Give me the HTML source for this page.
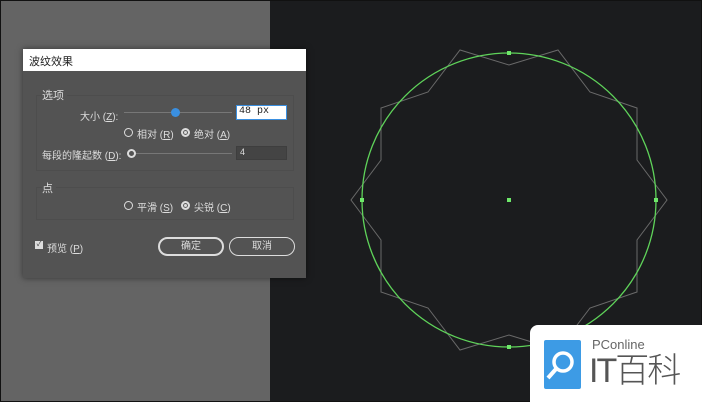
<!DOCTYPE html><html><head><meta charset="utf-8"><style>
*{margin:0;padding:0;box-sizing:border-box}
body{width:702px;height:402px;overflow:hidden;background:#1b1c1e;position:relative;font-family:"Liberation Sans","Noto Sans CJK SC",sans-serif;font-size:10px;color:#ddd}
.a{position:absolute}
.t{position:absolute;white-space:nowrap}
</style></head><body>
<div class="a" style="left:0;top:0;width:702px;height:402px;border:1px solid #111"></div>
<div class="a" style="left:1px;top:1px;width:269px;height:400px;background:#646464"></div>
<svg class="a" style="left:0;top:0" width="702" height="402">
<polygon fill="none" stroke="#6a6a6a" stroke-width="1" points="667,200 637,160 637,108 590,92 558,50 509,65 460,50 428,92 381,108 381,160 351,200 381,240 381,292 428,308 460,350 509,335 558,350 590,308 637,292 637,240"/>
<circle cx="509" cy="200" r="147" fill="none" stroke="#5fd35a" stroke-width="1.3"/>
<g fill="#6ee86a"><rect x="507" y="51" width="4" height="4"/><rect x="360" y="198" width="4" height="4"/><rect x="654" y="198" width="4" height="4"/><rect x="507" y="345" width="4" height="4"/><rect x="507" y="198" width="4" height="4"/></g>
</svg>
<div class="a" style="left:23px;top:49px;width:283px;height:229px;background:#535353;box-shadow:0 0 6px rgba(0,0,0,.5)"></div>
<div class="a" style="left:23px;top:49px;width:283px;height:22px;background:#fff"></div>
<div class="t" style="left:29px;top:53px;color:#222;font-size:11px">波纹效果</div>
<div class="a" style="left:36px;top:95px;width:258px;height:76px;border:1px solid #4d4d4d"></div>
<div class="t" style="left:42px;top:87px;font-size:11px;background:#535353;padding-right:3px">选项</div>
<div class="t" style="left:80px;top:108px">大小 (<u>Z</u>):</div>
<div class="a" style="left:124px;top:112px;width:108px;height:1px;background:#777"></div>
<div class="a" style="left:171px;top:108px;width:9px;height:9px;border-radius:50%;background:#3a8fe0"></div>
<div class="a" style="left:236px;top:105px;width:51px;height:15px;background:#fff;border:1px solid #3a8fe0"></div>
<div class="t" style="left:239px;top:106px;color:#222;font-family:'Liberation Mono',monospace">48 px</div>
<div class="a" style="left:124px;top:128px;width:9px;height:9px;border-radius:50%;border:1px solid #ddd"></div>
<div class="t" style="left:137px;top:126px">相对 (<u>R</u>)</div>
<div class="a" style="left:181px;top:128px;width:9px;height:9px;border-radius:50%;background:#ddd;border:2px solid #ddd;box-shadow:inset 0 0 0 1px #555"></div>
<div class="t" style="left:194px;top:126px">绝对 (<u>A</u>)</div>
<div class="t" style="left:42px;top:147px">每段的隆起数 (<u>D</u>):</div>
<div class="a" style="left:130px;top:153px;width:102px;height:1px;background:#777"></div>
<div class="a" style="left:127px;top:149px;width:9px;height:9px;border-radius:50%;border:2px solid #ddd;background:#535353"></div>
<div class="a" style="left:236px;top:146px;width:51px;height:14px;background:#444;border:1px solid #3e3e3e"></div>
<div class="t" style="left:240px;top:147px;font-size:9px">4</div>
<div class="a" style="left:36px;top:187px;width:258px;height:33px;border:1px solid #4d4d4d"></div>
<div class="t" style="left:42px;top:180px;font-size:11px;background:#535353;padding-right:3px">点</div>
<div class="a" style="left:124px;top:201px;width:9px;height:9px;border-radius:50%;border:1px solid #ddd"></div>
<div class="t" style="left:137px;top:199px">平滑 (<u>S</u>)</div>
<div class="a" style="left:181px;top:201px;width:9px;height:9px;border-radius:50%;background:#ddd;border:2px solid #ddd;box-shadow:inset 0 0 0 1px #555"></div>
<div class="t" style="left:194px;top:199px">尖锐 (<u>C</u>)</div>
<div class="a" style="left:35px;top:241px;width:8px;height:8px;background:#ddd;color:#333;font-size:7px;line-height:8px;text-align:center">✓</div>
<div class="t" style="left:47px;top:240px">预览 (<u>P</u>)</div>
<div class="a" style="left:158px;top:237px;width:66px;height:19px;border:2px solid #ddd;border-radius:10px;text-align:center;line-height:15px">确定</div>
<div class="a" style="left:229px;top:237px;width:66px;height:19px;border:1px solid #ddd;border-radius:10px;text-align:center;line-height:17px">取消</div>
<div class="a" style="left:530px;top:325px;width:172px;height:77px;background:#fff;border-radius:8px 0 0 0"></div>
<div class="a" style="left:544px;top:340px;width:37px;height:49px;background:#3d9be5;border-radius:2px"></div>
<svg class="a" style="left:544px;top:340px" width="37" height="49"><circle cx="19" cy="22" r="9" fill="none" stroke="#fff" stroke-width="3.5"/><line x1="12" y1="29" x2="4" y2="38" stroke="#fff" stroke-width="4"/></svg>
<div class="t" style="left:592px;top:337px;color:#666;font-size:13px">PConline</div>
<div class="t" style="left:589px;top:351px;color:#555;font-size:34px;font-weight:300;letter-spacing:-2px;line-height:40px">IT百科</div>
</body></html>
